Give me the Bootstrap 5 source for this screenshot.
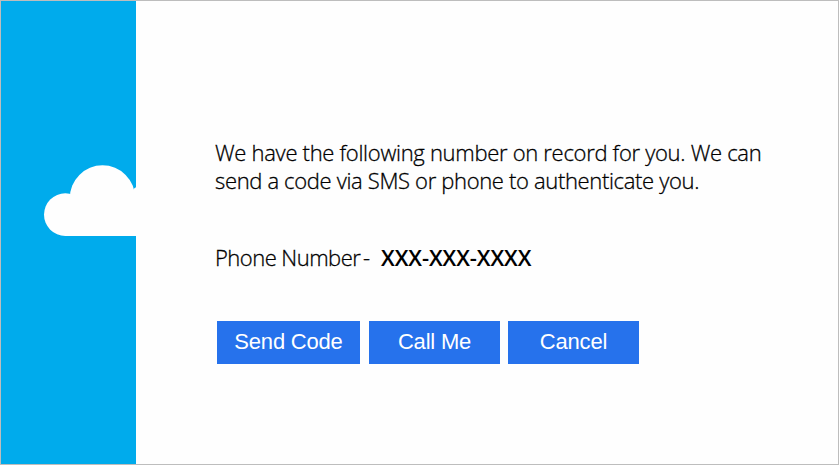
<!DOCTYPE html>
<html lang="en">
<head>
<meta charset="utf-8">
<meta name="viewport" content="width=device-width, initial-scale=1">
<title>Phone verification</title>
<link href="https://cdn.jsdelivr.net/npm/bootstrap@5.3.0/dist/css/bootstrap.min.css" rel="stylesheet">
<style>
body { font-family: "Open Sans", "Noto Sans", sans-serif; color: #000; background: #fefefe; }
.verify-page { border: 1px solid #bdbdbd; }
.brand-strip { width: 135px; background: #00abec; padding-top: 164px; }
.verify-body { padding: 137px 0 0 79px; }
.verify-text { font-size: 22px; line-height: 28px; font-weight: 300; -webkit-text-stroke: .3px #000; }
.verify-text span { white-space: nowrap; }
.line-one { letter-spacing: -.3px; }
.line-two { letter-spacing: -.34px; }
.phone-row { margin-top: 49px; }
.phone-label { width: 145px; letter-spacing: -.53px; }
.phone-dash { width: 18px; margin-left: 3px; }
.phone-value { font-weight: 600; letter-spacing: -.07px; -webkit-text-stroke: 0; }
.verify-actions { gap: 8px; margin: 50px 0 0 2px; }
.btn-verify { --bs-btn-color: #fff; --bs-btn-bg: #2672ec; --bs-btn-hover-color: #fff; --bs-btn-hover-bg: #1d62d0; --bs-btn-border-width: 0;
  width: 131px; height: 43px; padding: 0 0 1px; font: 22px/42px "Liberation Sans", Arial, sans-serif; letter-spacing: -.2px; }
.btn-send { width: 143px; margin-right: 1px; }
</style>
<script src="https://cdn.jsdelivr.net/npm/bootstrap@5.3.0/dist/js/bootstrap.bundle.min.js"></script>
</head>
<body>
<div class="verify-page d-flex vh-100 overflow-hidden">
  <aside class="brand-strip flex-shrink-0">
    <svg class="d-block" width="135" height="72" viewBox="1 165 135 72" fill="#fefefe" aria-hidden="true">
      <circle cx="65.300" cy="214.600" r="21.300"/>
      <circle cx="102.500" cy="198" r="32.700"/>
      <path d="M65.300 235.900V205H128L134.300 188.300L136 187.200V235.900Z"/>
    </svg>
  </aside>
  <main class="verify-body flex-grow-1">
    <p class="verify-text mb-0"><span class="line-one">We have the following number on record for you. We can</span><br><span class="line-two">send a code via SMS or phone to authenticate you.</span></p>
    <div class="phone-row verify-text d-flex"><span class="phone-label">Phone Number</span><span class="phone-dash">-</span><span class="phone-value">XXX-XXX-XXXX</span></div>
    <div class="verify-actions d-flex">
      <button type="button" class="btn btn-verify btn-send rounded-0">Send Code</button>
      <button type="button" class="btn btn-verify rounded-0">Call Me</button>
      <button type="button" class="btn btn-verify rounded-0">Cancel</button>
    </div>
  </main>
</div>
</body>
</html>
